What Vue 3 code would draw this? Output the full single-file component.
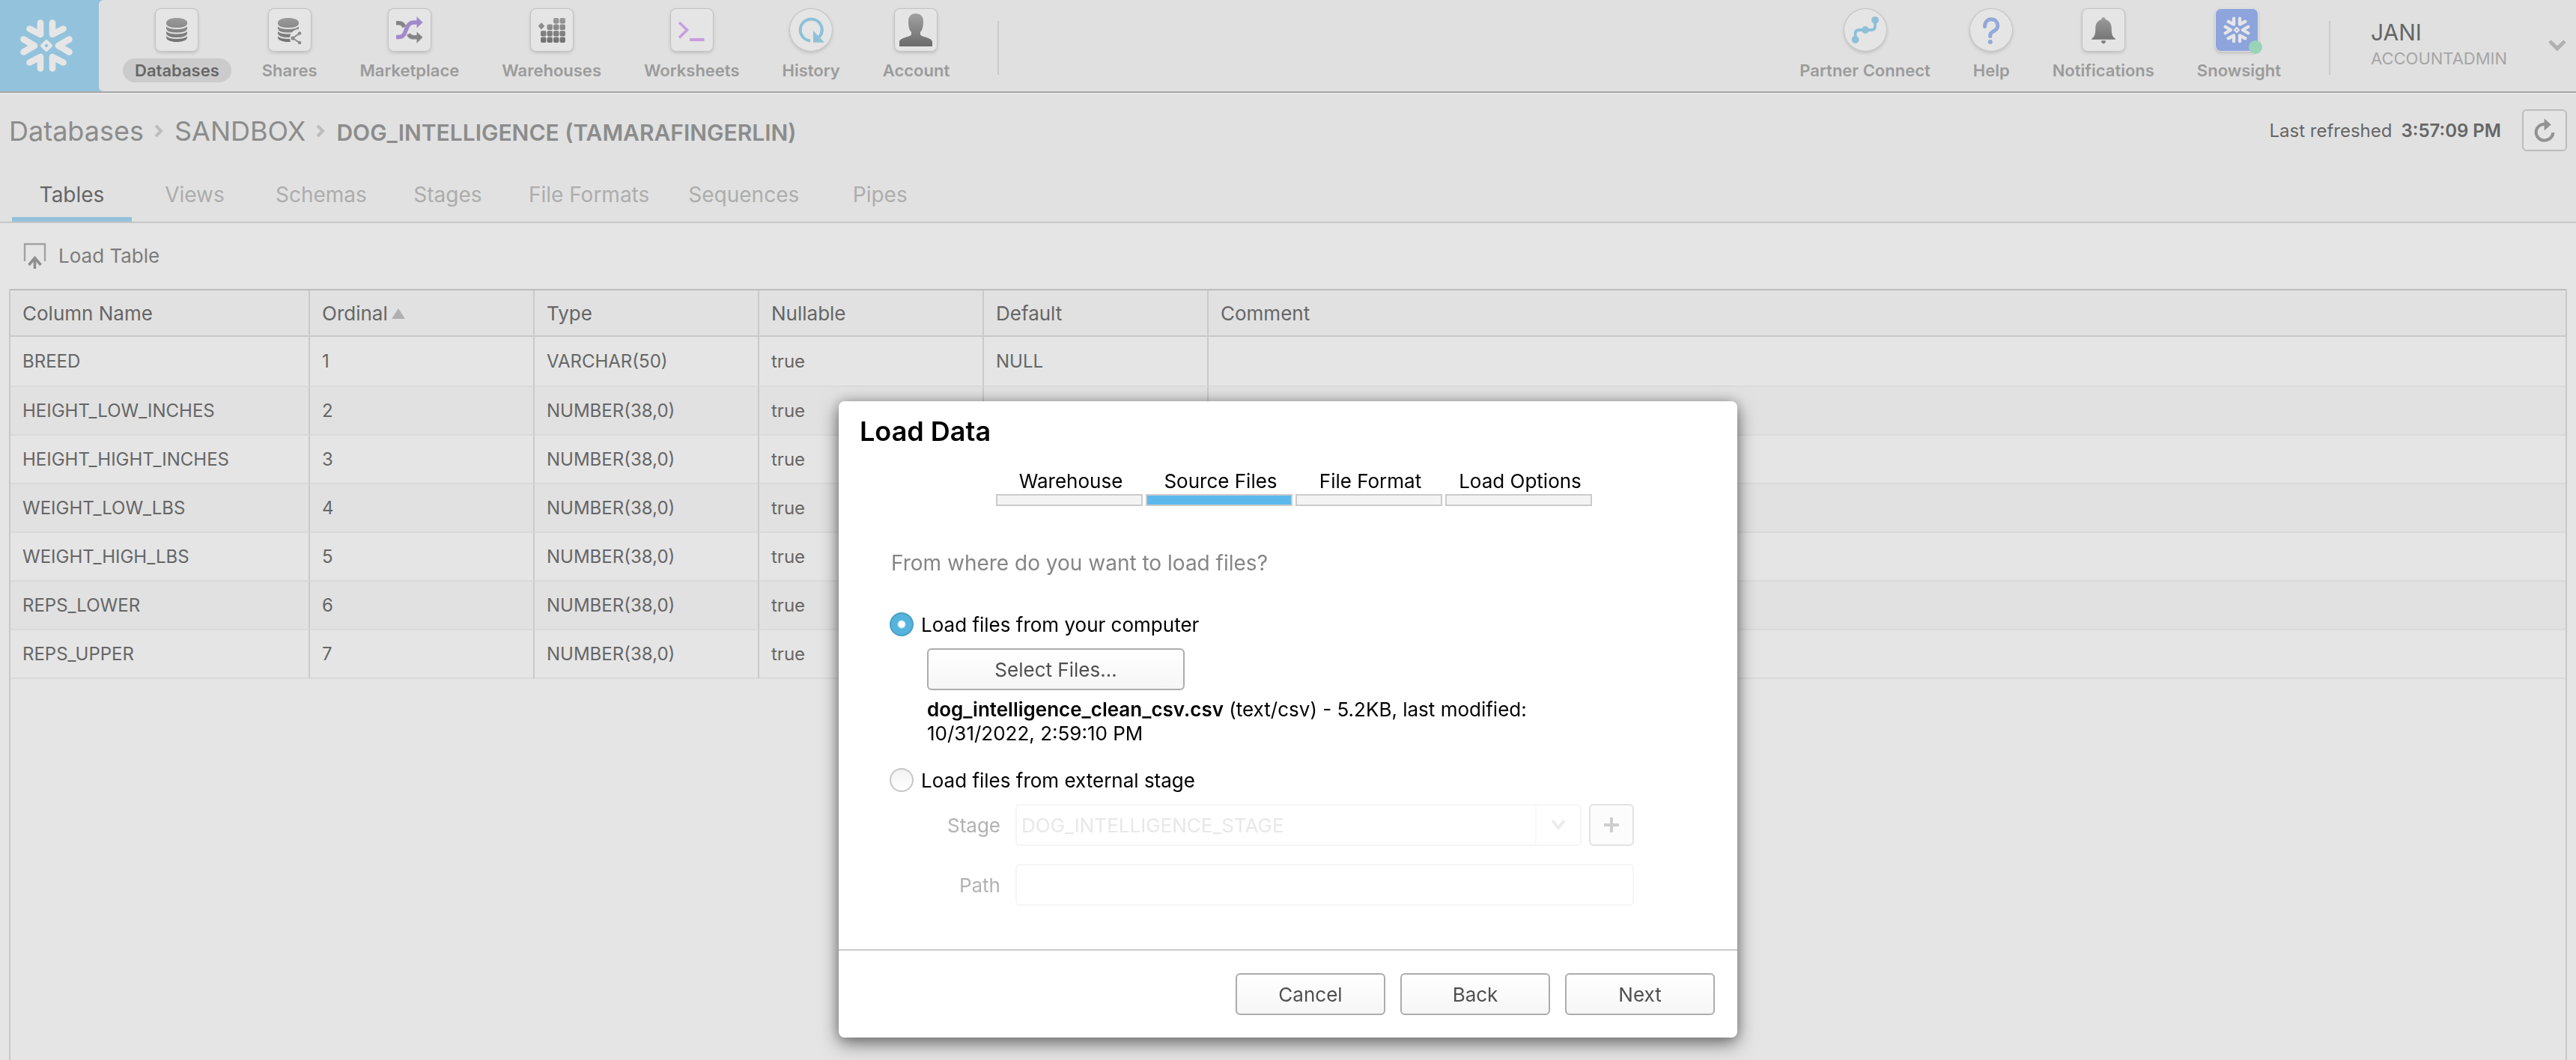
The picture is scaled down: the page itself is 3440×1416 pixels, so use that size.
<script setup>
import { ref } from 'vue'

const cylinder = (x, fill) => `
  <path fill="${fill}" d="M${x} 19.5C${x} 15.6 ${x + 6} 13 ${x + 14} 13s14 2.6 14 6.5v19.5c0 3.6-6 6-14 6s-14-2.4-14-6z"/>
  <g fill="none" stroke="#e5e5e5" stroke-width="1.8">
    <path d="M${x - 1} 21c1 4 7 6 15 6s14-2 15-6"/>
    <path d="M${x - 1} 27.5c1 4 7 6 15 6s14-2 15-6"/>
    <path d="M${x - 1} 34c1 4 7 6 15 6s14-2 15-6"/>
  </g>`

const cells = [
  [31, 13], [39.5, 13],
  [22.5, 21.5], [31, 21.5], [39.5, 21.5],
  [14, 30], [22.5, 30], [31, 30], [39.5, 30],
  [14, 38.5], [22.5, 38.5], [31, 38.5], [39.5, 38.5],
].map(([x, y]) => `<rect x="${x}" y="${y}" width="7.4" height="7.4" rx="2"/>`).join('')

const mainNav = [
  { label: 'Databases', active: true, art: cylinder(15, 'url(#ink)') },
  {
    label: 'Shares',
    art: `${cylinder(13, 'url(#ink)')}
      <circle cx="41" cy="40" r="12" fill="#e5e5e5"/>
      <path d="M42 33.5L33 40l9 6" fill="none" stroke="#8a8a8a" stroke-width="2"/>
      <g fill="#8a8a8a"><circle cx="42" cy="33.5" r="2.3"/><circle cx="33" cy="40" r="2.6"/><circle cx="42" cy="46" r="2.3"/></g>`,
  },
  {
    label: 'Marketplace',
    art: `<g fill="none" stroke="#858585" stroke-width="5.5"><path d="M11 19.7h4.5c3 0 5 2 6.5 5.5"/><path d="M27.5 34.5c1.5 3 3.5 4.3 6 4.3H39"/></g>
      <path fill="#858585" d="M38.5 31.5l8 7.3-8 8z"/>
      <path fill="none" stroke="#a08acb" stroke-width="5.5" d="M11 38.5h4c12 0 6-19.5 20-19.5h4"/>
      <path fill="#a08acb" d="M38.5 11l8 8-8 7.5z"/>`,
  },
  { label: 'Warehouses', art: `<g fill="url(#ink)">${cells}<path d="M15 19l4.3 4.7L15 28.5l-4.3-4.8z"/></g>` },
  {
    label: 'Worksheets',
    art: `<path fill="none" stroke="#c99de0" stroke-width="3.6" d="M12 19l10.5 10L12 39.5"/><path fill="#c99de0" d="M26 40h19.5v4H26z"/>`,
  },
  {
    label: 'History', round: true,
    art: `<path fill="none" stroke="#8fc0d7" stroke-width="4" d="M28 43.5A14.5 14.5 0 1 1 42 36"/><path fill="#8fc0d7" d="M32 30l15 15.8H32z"/><path fill="none" stroke="#8fc0d7" stroke-width="4" d="M43.5 29c0 5-2 8-4.500 10.5"/>`,
  },
  {
    label: 'Account',
    art: `<path fill="url(#ink)" d="M29 7c6 0 10 3.8 10 10.5 0 7-1.2 11.5-4 14.5v3.5c2 3 16 4 16 9.5v6H7v-6c0-5.500 14-6.500 16-9.500V32c-2.800-3-4-7.500-4-14.500C19 10.8 23 7 29 7z"/>`,
  },
]

const sideNav = [
  {
    label: 'Partner Connect', round: true,
    art: `<path fill="none" stroke="#8fc0d7" stroke-width="3.8" d="M15.6 42v-8q0-5 5-5H37q5 0 5-5v-8"/><g fill="#8fc0d7"><circle cx="42" cy="15.8" r="4.9"/><circle cx="29" cy="29" r="4.9"/><circle cx="15.6" cy="42" r="4.9"/></g>`,
  },
  {
    label: 'Help', round: true,
    art: `<path fill="none" stroke="#93a9d8" stroke-width="5" stroke-linecap="round" d="M20.5 24.5c0-6 3.7-9.7 8.7-9.7s8.5 3.7 8.5 8.7c0 8-10 6.5-10 12.5v1.5"/><circle cx="27.8" cy="45" r="3" fill="#93a9d8"/>`,
  },
  {
    label: 'Notifications',
    art: `<path fill="url(#ink)" d="M29 12.3c1.6 0 2.7 1 2.7 2.7 5 1.5 8 5.5 8 11.5 0 8 1 11.5 5.3 14.5v.8H13V41c4.3-3 5.3-6.500 5.3-14.500 0-6 3-10 8-11.500 0-1.700 1.100-2.700 2.700-2.700z"/><path fill="#7c7c7c" d="M26 43.3h6c0 2.500-1.400 4-3 4s-3-1.500-3-4z"/>`,
  },
]

const snowflake = `
  <g fill="none" stroke="#e6e6e6" stroke-width="8.6" stroke-linecap="round" stroke-linejoin="round">
    <path d="M-8-30.5V-15l-14.5-7.5M8-30.5V-15l14.5-7.5M-8 30.5V15l-14.5 7.5M8 30.5V15l14.5 7.5M-30.5-8.5L-16 0l-14.5 8.5M30.5-8.5L16 0l14.5 8.5"/>
  </g>
  <path fill="none" stroke="#e6e6e6" stroke-width="4.4" stroke-linejoin="round" d="M0-5.8L5.8 0 0 5.8-5.8 0z"/>`

const tabs = ['Tables', 'Views', 'Schemas', 'Stages', 'File Formats', 'Sequences', 'Pipes']

const columns = [
  { name: 'BREED', type: 'VARCHAR(50)', fallback: 'NULL' },
  { name: 'HEIGHT_LOW_INCHES', type: 'NUMBER(38,0)' },
  { name: 'HEIGHT_HIGHT_INCHES', type: 'NUMBER(38,0)' },
  { name: 'WEIGHT_LOW_LBS', type: 'NUMBER(38,0)' },
  { name: 'WEIGHT_HIGH_LBS', type: 'NUMBER(38,0)' },
  { name: 'REPS_LOWER', type: 'NUMBER(38,0)' },
  { name: 'REPS_UPPER', type: 'NUMBER(38,0)' },
]

const steps = ['Warehouse', 'Source Files', 'File Format', 'Load Options']
const source = ref('computer')
</script>

<template>
  <div class="page">
    <svg class="defs" width="0" height="0" aria-hidden="true">
      <defs>
        <linearGradient id="ink" gradientUnits="userSpaceOnUse" x1="0" y1="8" x2="0" y2="50">
          <stop offset="0" stop-color="#a0a0a0" /><stop offset="1" stop-color="#6c6c6c" />
        </linearGradient>
      </defs>
    </svg>

    <header class="topbar">
      <a class="logo" href="#" aria-label="Home">
        <svg width="72" height="72" viewBox="-36 -36 72 72" v-html="snowflake" />
      </a>
      <div class="bar">
        <nav class="nav">
          <a v-for="item in mainNav" :key="item.label" href="#" class="nav-item" :class="{ active: item.active }">
            <span class="tile" :class="{ round: item.round }"><svg width="58" height="58" viewBox="0 0 58 58" v-html="item.art" /></span>
            <span class="nav-label">{{ item.label }}</span>
          </a>
        </nav>
        <span class="divider"></span>
        <nav class="nav side">
          <a v-for="item in sideNav" :key="item.label" href="#" class="nav-item">
            <span class="tile" :class="{ round: item.round }"><svg width="58" height="58" viewBox="0 0 58 58" v-html="item.art" /></span>
            <span class="nav-label">{{ item.label }}</span>
          </a>
          <a href="#" class="nav-item snowsight">
            <span class="tile blue">
              <svg width="36" height="36" viewBox="-36 -36 72 72" v-html="snowflake" />
              <i class="dot"></i>
            </span>
            <span class="nav-label">Snowsight</span>
          </a>
        </nav>
        <span class="divider"></span>
        <button class="user" type="button">
          <span class="who"><span class="user-name">JANI</span><span class="role">ACCOUNTADMIN</span></span>
          <svg width="26" height="18" viewBox="0 0 26 18"><path d="M3 3l10 10L23 3" fill="none" stroke="#b0b0b0" stroke-width="5" /></svg>
        </button>
      </div>
    </header>

    <section class="head">
      <div class="crumb-row">
        <nav class="crumbs">
          <a href="#">Databases</a>
          <svg width="12" height="18" viewBox="0 0 12 18"><path d="M2 2l7 7-7 7" fill="none" stroke="#bdbdbd" stroke-width="4" /></svg>
          <a href="#">SANDBOX</a>
          <svg width="12" height="18" viewBox="0 0 12 18"><path d="M2 2l7 7-7 7" fill="none" stroke="#bdbdbd" stroke-width="4" /></svg>
          <h1>DOG_INTELLIGENCE (TAMARAFINGERLIN)</h1>
        </nav>
        <div class="refresh">
          <span>Last refreshed</span><b>3:57:09 PM</b>
          <button type="button" aria-label="Refresh">
            <svg width="32" height="36" viewBox="0 0 32 36">
              <path d="M29 21.500A13 12.500 0 1 1 16 8.500" fill="none" stroke="#929292" stroke-width="4.600" />
              <path d="M15.500 0l10.500 9.500-10.500 9z" fill="#929292" />
            </svg>
          </button>
        </div>
      </div>
      <nav class="tabs">
        <a v-for="(tab, i) in tabs" :key="tab" href="#" :class="{ active: i === 0 }">{{ tab }}</a>
      </nav>
    </section>

    <div class="toolbar">
      <button type="button">
        <svg width="32" height="36" viewBox="0 0 32 36" fill="none" stroke="#a2a2a2">
          <path d="M3 26V3h27v23" stroke-width="2.4" />
          <path d="M16.5 36V22M8.5 31l8-9.500 8 9.500" stroke="#8e8e8e" stroke-width="3.6" />
        </svg>
        <span>Load Table</span>
      </button>
    </div>

    <main class="panel">
      <table>
        <colgroup><col class="wide" /><col class="mid" /><col class="mid" /><col class="mid" /><col class="mid" /><col /></colgroup>
        <thead>
          <tr>
            <th>Column Name</th>
            <th>Ordinal<svg class="sort" width="18" height="14" viewBox="0 0 18 14"><path d="M9 0l9 14H0z" fill="#b0b0b0" /></svg></th>
            <th>Type</th><th>Nullable</th><th>Default</th><th>Comment</th>
          </tr>
        </thead>
        <tbody>
          <tr v-for="(c, i) in columns" :key="c.name">
            <td>{{ c.name }}</td><td>{{ i + 1 }}</td><td>{{ c.type }}</td><td>true</td><td>{{ c.fallback }}</td><td></td>
          </tr>
        </tbody>
      </table>
    </main>

    <div class="overlay">
      <form class="dialog" role="dialog" aria-labelledby="dialog-title" @submit.prevent>
        <h2 id="dialog-title">Load Data</h2>
        <ol class="steps">
          <li v-for="(s, i) in steps" :key="s" :class="{ active: i === 1 }"><span>{{ s }}</span><i></i></li>
        </ol>
        <div class="body">
          <p class="question">From where do you want to load files?</p>
          <label class="choice"><input v-model="source" type="radio" name="source" value="computer" />Load files from your computer</label>
          <div class="local">
            <button class="btn select-files" type="button">Select Files...</button>
            <p class="file"><b>dog_intelligence_clean_csv.csv</b> (text/csv) - 5.2KB, last modified: 10/31/2022, 2:59:10 PM</p>
          </div>
          <label class="choice"><input v-model="source" type="radio" name="source" value="stage" />Load files from external stage</label>
          <div class="field">
            <label for="stage">Stage</label>
            <div class="combo">
              <select id="stage" disabled><option>DOG_INTELLIGENCE_STAGE</option></select>
              <span class="arrow"><svg width="20" height="14" viewBox="0 0 20 14"><path d="M2 1l8 10 8-10" fill="none" stroke="#ebebeb" stroke-width="4" /></svg></span>
            </div>
            <button class="plus" type="button" aria-label="Add stage" disabled>
              <svg width="20" height="20" viewBox="0 0 20 20"><path d="M10 0v20M0 10h20" stroke="#cecece" stroke-width="4" /></svg>
            </button>
          </div>
          <div class="field">
            <label for="path">Path</label>
            <input id="path" type="text" disabled />
          </div>
        </div>
        <footer>
          <button class="btn" type="button">Cancel</button>
          <button class="btn" type="button">Back</button>
          <button class="btn" type="submit">Next</button>
        </footer>
      </form>
    </div>
  </div>
</template>

<style>
body { margin: 0; background: #e5e5e5; }
</style>

<style scoped>
* { box-sizing: border-box; }
.page { min-height: 100vh; display: flex; flex-direction: column; background: #e5e5e5; color: #666; font-family: Inter, "Liberation Sans", sans-serif; font-size: 26px; }
.defs { position: absolute; }
svg { display: block; flex: none; }
a { color: inherit; text-decoration: none; }
button { font: inherit; color: inherit; margin: 0; padding: 0; border: 0; background: none; cursor: pointer; }
h1, h2, p, ol { margin: 0; padding: 0; font-weight: 400; }

.topbar { display: flex; height: 124px; background: #93c3dc; border-bottom: 2px solid #a6a6a6; }
.logo { width: 132px; display: flex; align-items: center; justify-content: center; padding-right: 8px; flex: none; }
.bar { flex: 1; display: flex; background: #e0e0e0; border-radius: 6px 0 0 6px; padding-left: 32px; }
.nav { display: flex; gap: 25px; padding-top: 11px; }
.side { margin-left: auto; }
.nav-item { display: flex; flex-direction: column; align-items: center; gap: 9px; }
.tile { position: relative; width: 58px; height: 58px; display: flex; align-items: center; justify-content: center; background: #e5e5e5; border-radius: 8px; box-shadow: inset 0 0 0 1px #c2c2c2, 0 2px 4px rgba(0, 0, 0, 0.14); }
.tile.round { border-radius: 50%; }
.tile.blue { background: #8da4dc; box-shadow: 0 2px 4px rgba(0, 0, 0, 0.16); border: 1px solid #e0e0e0; }
.dot { position: absolute; right: -6px; bottom: -4px; width: 18px; height: 18px; border-radius: 50%; background: #99d4b6; }
.nav-label { height: 32px; line-height: 32px; padding: 0 16px; border-radius: 16px; font-size: 22px; font-weight: 600; color: #9b9b9b; white-space: nowrap; }
.active .nav-label { background: #cbcbcb; color: #666; }
.snowsight .tile { margin-right: 6px; }
.divider { width: 2px; height: 72px; margin: 28px 0 0 48px; background: #cacaca; flex: none; }
.user { display: flex; align-items: flex-start; justify-content: space-between; width: 328px; padding: 24px 12px 0 54px; text-align: left; }
.user svg { margin-top: 28px; }
.who { display: flex; flex-direction: column; }
.user-name { font-size: 30px; line-height: 38px; }
.role { font-size: 22px; line-height: 32px; color: #a6a6a6; }

.head { background: #e1e1e1; border-top: 2px solid #e8e8e8; border-bottom: 2px solid #c6c6c6; }
.crumb-row { display: flex; justify-content: space-between; align-items: flex-start; height: 112px; padding: 20px 12px 0; }
.crumbs { display: flex; align-items: center; height: 58px; font-size: 36px; color: #8c8c8c; white-space: nowrap; }
.crumbs svg { margin: 0 15px 0 14px; }
.crumbs h1 { font-size: 30px; font-weight: 600; line-height: 40px; margin-top: 4px; }
.refresh { display: flex; align-items: center; height: 56px; font-size: 24px; white-space: nowrap; }
.refresh b { font-weight: 600; margin: 0 28px 0 12px; }
.refresh button { width: 60px; height: 56px; border: 2px solid #bcbcbc; border-radius: 6px; background: #e4e4e4; display: flex; align-items: center; justify-content: center; }
.refresh svg { width: 28px; height: 32px; }
.tabs { display: flex; gap: 4px; padding-left: 16px; font-size: 28px; color: #adadad; white-space: nowrap; }
.tabs a { min-width: 160px; height: 58px; padding: 0 24px; line-height: 44px; text-align: center; border-bottom: 6px solid transparent; }
.tabs a.active { color: #666; border-color: #93c1dc; }

.toolbar { height: 88px; padding: 24px 30px 0; }
.toolbar button { display: flex; align-items: center; gap: 16px; height: 38px; color: #7c7c7c; }

.panel { flex: 1; margin: 0 12px; border: 2px solid #c8c8c8; border-top-color: #bdbdbd; border-bottom: 0; }
table { width: 100%; border-collapse: separate; border-spacing: 0; table-layout: fixed; }
.wide { width: 400px; }
.mid { width: 300px; }
th, td { padding: 0 16px; text-align: left; font-weight: 400; white-space: nowrap; border-right: 2px solid #cacaca; border-bottom: 2px solid #c8c8c8; }
th { height: 62px; background: #e1e1e1; font-size: 26px; }
td { height: 65px; font-size: 24px; border-bottom-color: #dadada; background: #e5e5e5; }
th:last-child, td:last-child { border-right: 0; }
tbody tr:first-child td { height: 67px; }
tbody tr:nth-child(even) td { background: #e1e1e1; }
.sort { display: inline-block; margin: 0 0 2px 5px; }

.overlay { position: fixed; inset: 0; display: flex; justify-content: center; align-items: flex-end; padding-bottom: 30px; }
.dialog { width: 1200px; background: #fff; border-radius: 8px; color: #000; box-shadow: 0 8px 24px rgba(0, 0, 0, 0.5), 0 0 16px rgba(0, 0, 0, 0.2); }
.dialog h2 { padding: 18px 28px 0; font-size: 36px; font-weight: 600; line-height: 44px; }
.steps { display: flex; width: 800px; margin: 28px 0 0 210px; list-style: none; }
.steps li { width: 200px; text-align: center; line-height: 34px; white-space: nowrap; }
.steps i { display: block; width: 196px; height: 16px; border: 2px solid #cbcbcb; background: #f4f4f4; }
.steps .active i { background: #5cb9ec; }
.body { padding: 56px 138px 58px 68px; }
.question { padding-left: 2px; font-size: 28px; line-height: 40px; color: #858585; }
.question + .choice { margin-top: 46px; }
.choice { display: flex; align-items: center; gap: 10px; height: 32px; }
.choice input { appearance: none; margin: 0; width: 32px; height: 32px; border: 2px solid #c6c6c6; border-radius: 50%; background: linear-gradient(#f2f2f2, #fff); }
.choice input:checked { border-color: #4a9fc2; background: radial-gradient(circle, #fff 4px, #55b4de 6px); }
.local { padding: 16px 0 0 50px; }
.btn { width: 200px; height: 56px; border: 2px solid #acacac; border-radius: 6px; background: linear-gradient(#fff, #f6f6f6); color: #505050; }
.select-files { display: block; width: 344px; }
.file { width: 860px; margin: 10px 0 30px; line-height: 32px; }
.file b { font-weight: 600; }
.field { display: flex; align-items: center; height: 56px; margin-top: 24px; }
.choice + .field { margin-top: 16px; }
.field label { width: 148px; margin-right: 20px; text-align: right; color: #b2b2b2; }
.combo { position: relative; flex: 1; height: 56px; }
.field select, .field > input { appearance: none; width: 100%; height: 56px; margin: 0; padding: 0 6px; border: 2px solid #f5f5f5; border-radius: 6px; background: #fff; color: #e8e8e8; font: inherit; opacity: 1; }
.field > input { flex: 1; }
.arrow { position: absolute; top: 2px; right: 2px; bottom: 2px; width: 60px; display: flex; align-items: center; justify-content: center; border-left: 2px solid #f7f7f7; pointer-events: none; }
.plus { width: 60px; height: 56px; margin-left: 10px; border: 2px solid #e2e2e2; border-radius: 6px; background: #fcfcfc; display: flex; align-items: center; justify-content: center; }
footer { display: flex; justify-content: flex-end; gap: 20px; padding: 30px; border-top: 2px solid #cacaca; }
</style>
